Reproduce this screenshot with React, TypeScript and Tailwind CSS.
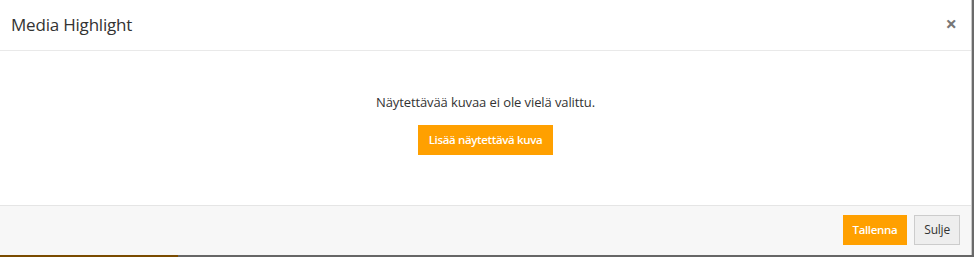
import React from "react";

const font = { fontFamily: '"Open Sans", "Noto Sans", Arial, sans-serif' };

export default function App() {
  return (
    <div className="w-[974px] h-[257px] bg-[#6b6b6b] flex flex-col overflow-hidden" style={font}>
      <div className="flex flex-1">
        <div className="w-[972px] h-[255px] bg-white border-r border-[#c8c8c8] flex flex-col">
          <div className="h-[51px] border-b border-[#e9e9e9] flex items-center justify-between pl-[11px] pr-[14px]">
            <h4 className="text-[17px] text-[#333] tracking-[-0.2px]">Media Highlight</h4>
            <button className="text-[#777] text-[20px] font-bold leading-none pb-[2px]">×</button>
          </div>
          <div className="h-[154px] flex flex-col items-center pt-[42px]">
            <p className="text-[13px] text-[#333] tracking-[-0.1px]">Näytettävää kuvaa ei ole vielä valittu.</p>
            <button className="mt-[12px] h-[30px] px-[11px] bg-[#ffa000] text-white text-[11.5px] font-semibold tracking-[-0.35px]">
              Lisää näytettävä kuva
            </button>
          </div>
          <div className="flex-1 bg-[#f7f7f7] border-t border-[#e5e5e5] flex items-center justify-end gap-[7px] pr-[11px] pb-[2px]">
            <button className="h-[30px] px-[10px] bg-[#ffa000] text-white text-[11.5px] font-semibold tracking-[-0.35px]">Tallenna</button>
            <button className="h-[30px] px-[9px] bg-[#eeeeee] border border-[#cccccc] text-[#333] text-[12px] tracking-[-0.2px]">Sulje</button>
          </div>
        </div>
      </div>
      <div className="flex h-[2px]">
        <div className="w-[178px] bg-[#7a4b00]" />
        <div className="flex-1 bg-[#666]" />
      </div>
    </div>
  );
}
